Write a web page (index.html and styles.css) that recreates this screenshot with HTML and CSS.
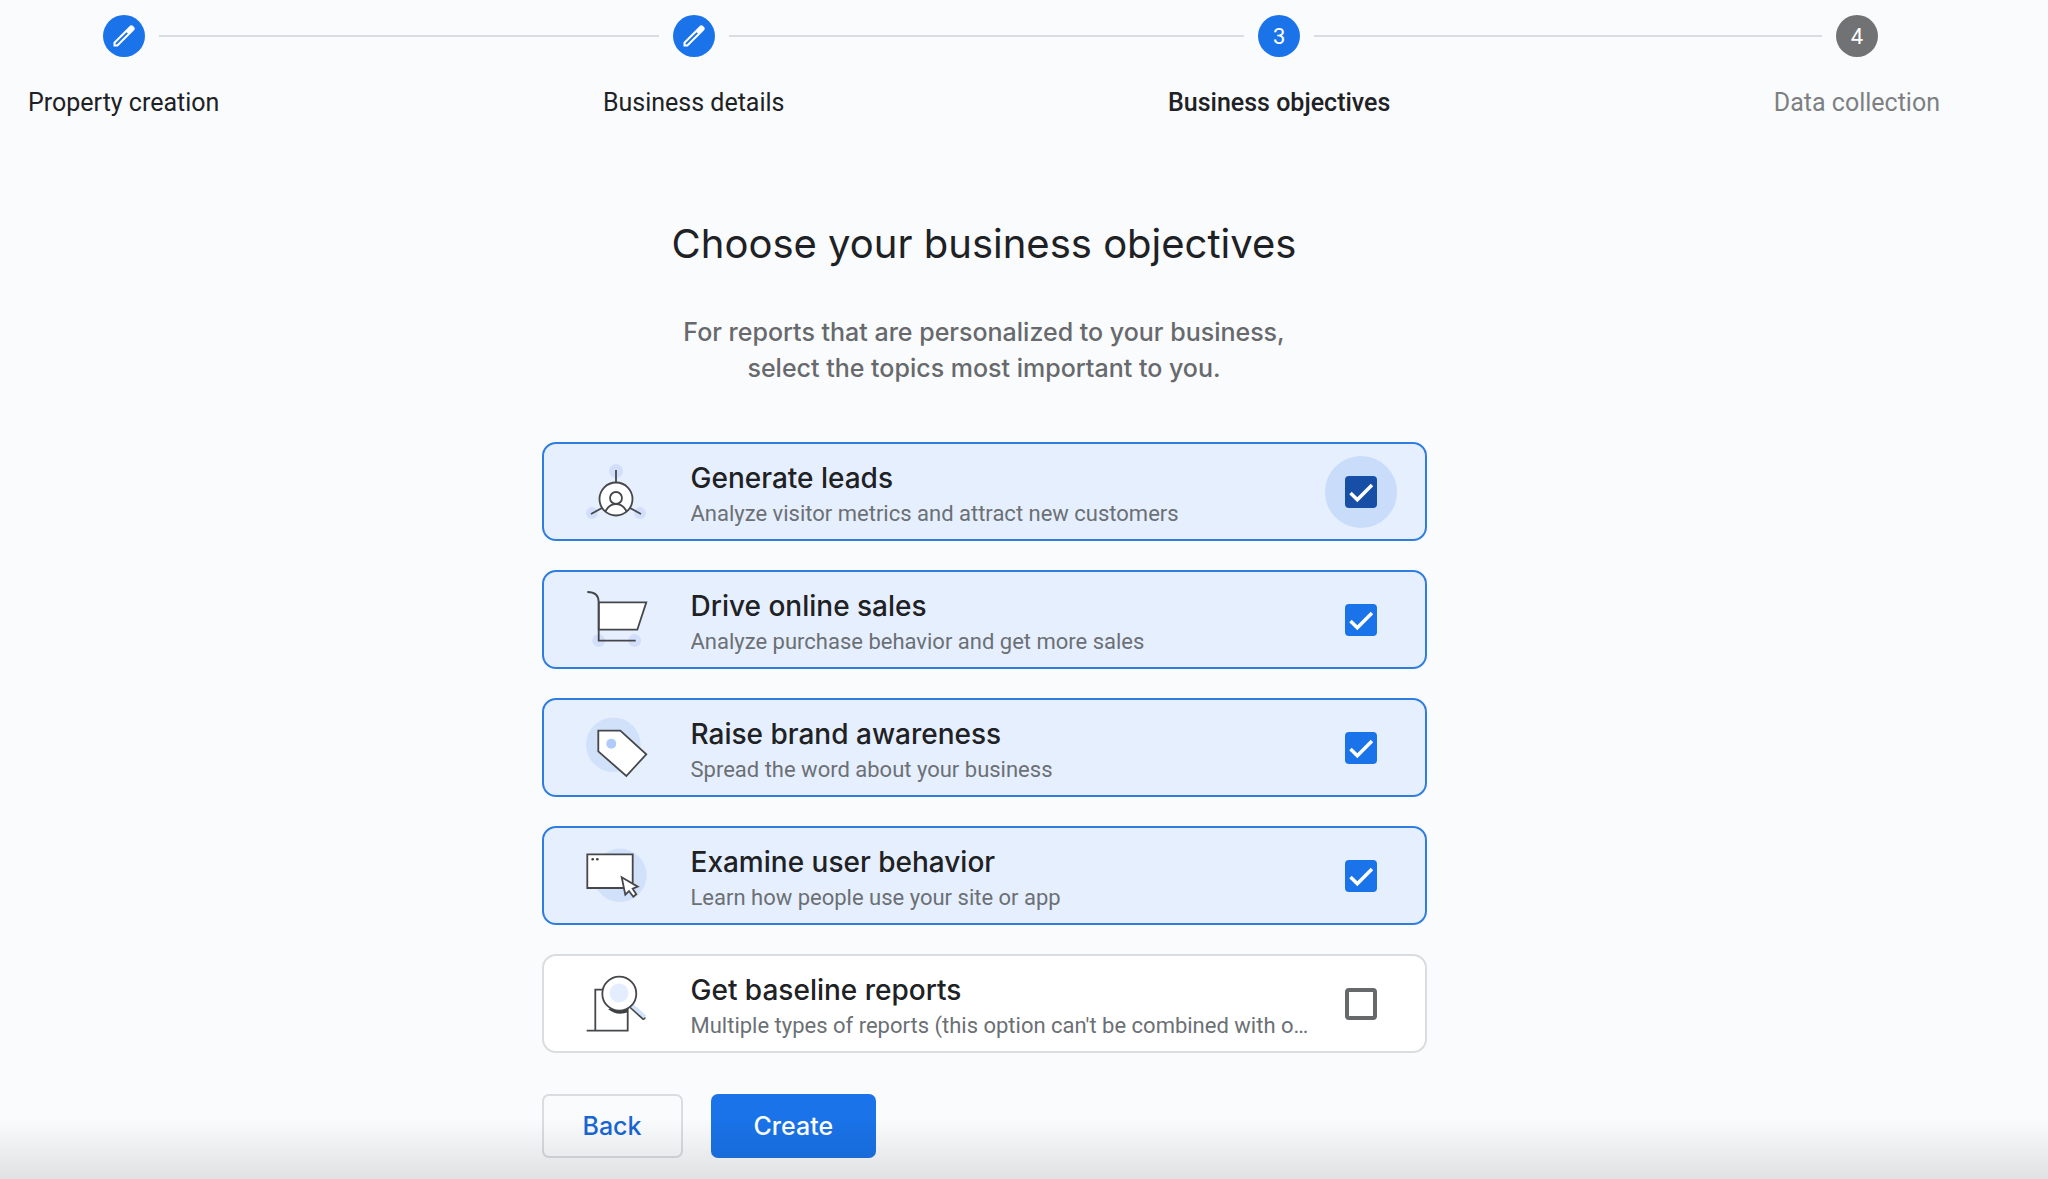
FILE: index.html
```
<!DOCTYPE html>
<html lang="en">
  <head>
    <meta charset="UTF-8" />
    <meta name="viewport" content="width=device-width, initial-scale=1.0" />
    <title>Business objectives</title>
    <link rel="stylesheet" href="styles.css">
  </head>
  <body>
    <main>
      <ol class="stepper">
        <li class="step done">
          <div class="marker">
            <span class="circle">
              <svg viewBox="0 0 24 24"><path fill-rule="evenodd" d="M3 17.3V21h3.700L20.400 7.300a2.200 2.200 0 0 0 0-3.200l-.5-.5a2.200 2.200 0 0 0-3.200 0zM5.900 19.200H4.800v-1.100L14.200 8.700l1.100 1.100z" /></svg>
            </span>
          </div>
          <span class="label">Property creation</span>
        </li>
        <li class="line"></li>
        <li class="step done">
          <div class="marker">
            <span class="circle">
              <svg viewBox="0 0 24 24"><path fill-rule="evenodd" d="M3 17.3V21h3.700L20.400 7.300a2.200 2.200 0 0 0 0-3.200l-.5-.5a2.200 2.200 0 0 0-3.200 0zM5.900 19.200H4.800v-1.100L14.200 8.700l1.100 1.100z" /></svg>
            </span>
          </div>
          <span class="label">Business details</span>
        </li>
        <li class="line"></li>
        <li class="step current">
          <div class="marker"><span class="circle">3</span></div>
          <span class="label">Business objectives</span>
        </li>
        <li class="line"></li>
        <li class="step upcoming">
          <div class="marker"><span class="circle">4</span></div>
          <span class="label">Data collection</span>
        </li>
      </ol>

      <h1>Choose your business objectives</h1>
      <p class="intro">For reports that are personalized to your business,<br />select the topics most important to you.</p>

      <form>
        <label class="card">
          <svg class="icon" viewBox="0 0 62 62">
            <g class="dot">
              <circle cx="30" cy="10" r="7" />
              <circle cx="6" cy="52" r="6" />
              <circle cx="54" cy="52" r="6" />
            </g>
            <path d="M30 9v12M5 53l11-6M44 47l11 6" />
            <circle class="paper" cx="30" cy="38" r="16.5" />
            <circle cx="30" cy="37" r="6" />
            <path d="M19.5 50.3C22 45.5 25.5 43 30 43s8 2.5 10.5 7.3" />
          </svg>
          <span class="text">
            <span class="name">Generate leads</span>
            <span class="description">Analyze visitor metrics and attract new customers</span>
          </span>
          <span class="check focused">
            <input type="checkbox" checked />
            <svg viewBox="0 0 32 32"><path d="M5.5 17l6.8 6.8L27 9" /></svg>
          </span>
        </label>

        <label class="card">
          <svg class="icon" viewBox="0 0 62 62">
            <g class="dot">
              <circle cx="12.7" cy="51.5" r="6.5" />
              <circle cx="48.7" cy="51.5" r="6.5" />
            </g>
            <path class="paper" d="M12.7 13.3h47.6l-9 27.4H12.7z" />
            <path d="M1.3 3C8 3 12.7 6 12.7 13v38.7h37" />
          </svg>
          <span class="text">
            <span class="name">Drive online sales</span>
            <span class="description">Analyze purchase behavior and get more sales</span>
          </span>
          <span class="check">
            <input type="checkbox" checked />
            <svg viewBox="0 0 32 32"><path d="M5.5 17l6.8 6.8L27 9" /></svg>
          </span>
        </label>

        <label class="card">
          <svg class="icon" viewBox="0 0 62 62">
            <circle class="blob" cx="27.3" cy="27.7" r="27.3" />
            <path class="paper" d="M12.3 13.7h22l26 23.6-20 21.7-28-24.7z" />
            <circle class="hole" cx="25.3" cy="26.7" r="5" />
          </svg>
          <span class="text">
            <span class="name">Raise brand awareness</span>
            <span class="description">Spread the word about your business</span>
          </span>
          <span class="check">
            <input type="checkbox" checked />
            <svg viewBox="0 0 32 32"><path d="M5.5 17l6.8 6.8L27 9" /></svg>
          </span>
        </label>

        <label class="card">
          <svg class="icon" viewBox="0 0 62 62">
            <circle class="blob" cx="34" cy="30.3" r="26.7" />
            <path class="paper" d="M1.3 9.3h45.4V43H1.3z" />
            <circle class="ink" cx="6.7" cy="14.3" r="1.3" />
            <circle class="ink" cx="11.3" cy="14.3" r="1.3" />
            <path class="paper" d="M35.7 32.3l3.6 17.4 3.7-3.7 4.3 5.7 3-2.4-3.6-5.6 5-2z" />
          </svg>
          <span class="text">
            <span class="name">Examine user behavior</span>
            <span class="description">Learn how people use your site or app</span>
          </span>
          <span class="check">
            <input type="checkbox" checked />
            <svg viewBox="0 0 32 32"><path d="M5.5 17l6.8 6.8L27 9" /></svg>
          </span>
        </label>

        <label class="card">
          <svg class="icon" viewBox="0 0 62 62">
            <path d="M.7 57.7h41V34M17 16.7H9.3v41" />
            <path class="shade" d="M22 36c6 5 13 6 20 3v-5z" />
            <path class="handle-edge" d="M45.500 34l12 11" />
            <path class="handle" d="M46 32.500l13 11.500" />
            <circle class="paper" cx="33.3" cy="20.7" r="17" />
            <circle class="lens" cx="33" cy="20" r="9.5" />
          </svg>
          <span class="text">
            <span class="name">Get baseline reports</span>
            <span class="description">Multiple types of reports (this option can't be combined with other options)</span>
          </span>
          <span class="check">
            <input type="checkbox" />
            <svg viewBox="0 0 32 32"><path d="M5.5 17l6.8 6.8L27 9" /></svg>
          </span>
        </label>

        <div class="buttons">
          <button type="button" class="back">Back</button>
          <button type="button" class="create">Create</button>
        </div>
      </form>
    </main>
    <div class="fade"></div>
  </body>
</html>
```

FILE: styles.css
```
* {
  margin: 0;
  padding: 0;
  box-sizing: border-box;
}

body {
  min-height: 100vh;
  background-color: #f9fbfd;
  color: #202124;
  font-family: Roboto, sans-serif;
}

main {
  margin-right: 80px;
  padding: 15px 28px 20px;
}

/* ---------- Stepper ---------- */

.stepper {
  display: flex;
  list-style: none;
}

.step {
  text-align: center;
}

.line {
  flex: 1;
  height: 2px;
  margin-top: 20px;
  background-color: #dadce0;
}

.marker {
  display: flex;
  align-items: center;
  gap: 14px;
}

.marker::before,
.marker::after {
  content: "";
  flex: 1;
  height: 2px;
  background-color: #dadce0;
}

.step:first-child .marker::before,
.step:last-child .marker::after {
  background-color: transparent;
}

.circle {
  display: flex;
  align-items: center;
  justify-content: center;
  width: 42px;
  height: 42px;
  border-radius: 50%;
  background-color: #1a73e8;
  color: white;
  font-size: 22px;
}

.circle svg {
  width: 28px;
  fill: white;
}

.upcoming .circle {
  background-color: #717274;
}

.label {
  display: block;
  margin-top: 30px;
  font-size: 25px;
  line-height: 32px;
  white-space: nowrap;
}

.current .label {
  font-weight: 500;
}

.upcoming .label {
  color: #7d8083;
}

/* ---------- Heading ---------- */

h1 {
  margin-top: 97px;
  font-family: Inter, sans-serif;
  font-size: 40px;
  font-weight: 400;
  line-height: 56px;
  text-align: center;
}

.intro {
  margin-top: 42px;
  color: #67696c;
  font-family: Inter, sans-serif;
  font-size: 25px;
  font-weight: 500;
  line-height: 36px;
  text-align: center;
}

/* ---------- Cards ---------- */

form {
  max-width: 885px;
  margin: 56px auto 0;
}

.card {
  display: flex;
  align-items: center;
  height: 99px;
  margin-bottom: 29px;
  padding: 0 48px 0 42px;
  border: 2px solid #dadce0;
  border-radius: 14px;
  background-color: white;
  cursor: pointer;
}

.card:has(input:checked) {
  border-color: #2f7de1;
  background-color: #e6effe;
}

.icon {
  flex: none;
  width: 62px;
  height: 62px;
  margin-right: 43px;
  fill: none;
  stroke: #45474a;
  stroke-width: 1.8;
}

.icon .paper {
  fill: white;
}

.icon .dot {
  fill: #d3dffa;
  stroke: none;
}

.icon .blob {
  fill: #d2e1fa;
  stroke: none;
}

.icon .hole {
  fill: #aecbfa;
  stroke: none;
}

.icon .lens {
  fill: #e4edfe;
  stroke: none;
}

.icon .ink,
.icon .shade {
  fill: #3c4043;
  stroke: none;
}

.icon .handle-edge {
  stroke-width: 4;
  stroke-linecap: round;
}

.icon .handle {
  stroke: #d2e3fc;
  stroke-width: 4;
}

.text {
  flex: 1;
  min-width: 0;
  margin-right: 32px;
  padding-top: 4px;
}

.name {
  display: block;
  font-family: Inter, sans-serif;
  font-size: 28px;
  font-weight: 500;
  line-height: 40px;
}

.description {
  display: block;
  overflow: hidden;
  color: #6b7075;
  font-size: 22px;
  line-height: 32px;
  text-overflow: ellipsis;
  white-space: nowrap;
}

/* ---------- Checkbox ---------- */

.check {
  display: grid;
  flex: none;
  width: 32px;
  height: 32px;
}

.check input,
.check svg {
  grid-area: 1 / 1;
  width: 32px;
  height: 32px;
}

.check input {
  appearance: none;
  border: 4px solid #67696b;
  border-radius: 4px;
}

.check input:checked {
  border: none;
  background-color: #1a73e8;
}

.check svg {
  display: none;
  fill: none;
  stroke: white;
  stroke-width: 3.5;
}

.check input:checked + svg {
  display: block;
}

.check.focused {
  border-radius: 50%;
  background-color: #c9dcfa;
  box-shadow: 0 0 0 20px #c9dcfa;
}

.check.focused input {
  background-color: #174ea6;
}

/* ---------- Buttons ---------- */

.buttons {
  display: flex;
  gap: 28px;
  margin-top: 41px;
}

button {
  height: 64px;
  padding: 0 43px;
  border: none;
  border-radius: 7px;
  font-family: Inter, sans-serif;
  font-size: 25px;
  font-weight: 500;
  cursor: pointer;
}

.back {
  padding: 0 39px;
  border: 2px solid #dadce0;
  background-color: transparent;
  color: #1967d2;
}

.create {
  background-color: #1a73e8;
  color: white;
}

/* Shadow along the bottom edge of the window */
.fade {
  position: fixed;
  right: 0;
  bottom: 0;
  left: 0;
  height: 60px;
  background: linear-gradient(transparent, #0000001a);
  pointer-events: none;
}
```
